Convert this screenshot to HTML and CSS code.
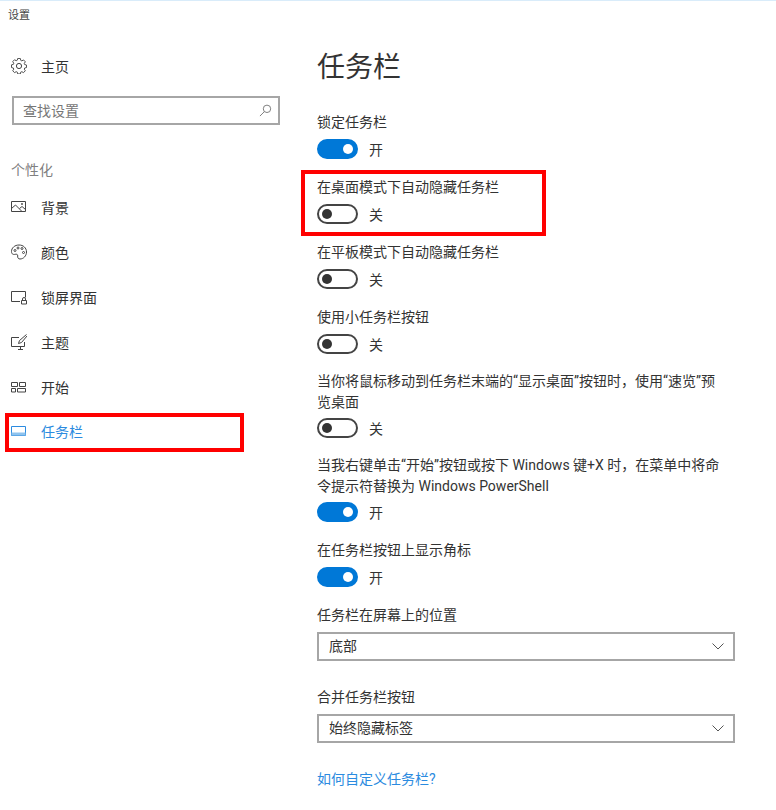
FILE: index.html
```html
<!DOCTYPE html>
<html lang="zh-CN">
<head>
    <meta charset="UTF-8">
    <meta name="viewport" content="width=device-width, initial-scale=1.0">
    <title>设置</title>
    <link rel="stylesheet" href="styles.css">
</head>
<body>
    <div class="window">
        <div class="titlebar">设置</div>

        <div class="content">
            <div class="sidebar">
                <div class="nav-item home">
                    <svg class="nav-icon" viewBox="0 0 16 16"><path d="M6.6 1h2.8l.4 2 1.2.6 1.8-1 1.9 2-1.1 1.7.4 1.2 2 .5v2.7l-2 .5-.4 1.2 1.1 1.7-1.9 2-1.8-1-1.2.5-.4 1.9H6.6l-.4-1.9-1.2-.5-1.8 1-1.9-2 1.1-1.7-.4-1.2-2-.5V7.8l2-.5.4-1.2-1.1-1.7 1.9-2 1.8 1 1.2-.6z" transform="translate(.5 -.5) scale(.94)"/><circle cx="8" cy="8" r="2.6"/></svg>
                    <span>主页</span>
                </div>

                <div class="search-box">
                    <span>查找设置</span>
                    <svg class="search-icon" viewBox="0 0 14 14"><circle cx="8.6" cy="5.2" r="4"/><path d="M5.8 8.2 1 13"/></svg>
                </div>

                <div class="nav-heading">个性化</div>

                <div class="nav-item">
                    <svg class="nav-icon" viewBox="0 0 16 16"><path d="M.5 2.5h14v10H.5z"/><path d="M.5 9.500 4.500 6l6.500 6.500M8.500 9.500l2.500-2 3.500 3"/><circle cx="11" cy="5" r=".6"/></svg>
                    <span>背景</span>
                </div>
                <div class="nav-item">
                    <svg class="nav-icon" viewBox="0 0 16 16"><path d="M8 1C3.800 1 .5 3.800.5 7.500c0 3 2.200 3.200 3.700 2.800 1.500-.4 2.800.2 2.500 1.700-.3 1.700.6 3 2.300 3 3.500 0 6.500-3.200 6.500-7C15.500 3.800 12.200 1 8 1z"/><circle cx="4" cy="6.500" r="1"/><circle cx="7" cy="4" r="1"/><circle cx="11" cy="4.500" r="1"/><circle cx="12.500" cy="8.500" r="1"/></svg>
                    <span>颜色</span>
                </div>
                <div class="nav-item">
                    <svg class="nav-icon" viewBox="0 0 16 16"><path d="M9 12.500H.5v-10h14v6"/><path d="M10.500 11.500h5v3.500h-5zM11.500 11.500V10a1.500 1.500 0 0 1 3 0v1.500"/></svg>
                    <span>锁屏界面</span>
                </div>
                <div class="nav-item">
                    <svg class="nav-icon" viewBox="0 0 16 16"><path d="M8 3.500H.5v9h13V8M7 15.500h5M9.500 12.500v3"/><path d="M15.500.5 8.500 6.500l-1 3 3-1 5.500-6.500"/></svg>
                    <span>主题</span>
                </div>
                <div class="nav-item">
                    <svg class="nav-icon" viewBox="0 0 16 16"><path d="M.5 3.500h6v4h-6zM8.500 3.500h6v4h-6zM.5 9.500h4v3.500h-4zM6.500 9.500h8v3.500h-8z"/></svg>
                    <span>开始</span>
                </div>
                <div class="nav-item active">
                    <svg class="nav-icon" viewBox="0 0 16 16"><path d="M.5 3.500h14v9H.5z"/><path class="fill" d="M.5 9.500h14v3H.5z"/></svg>
                    <span>任务栏</span>
                </div>
            </div>

            <div class="main">
                <h1>任务栏</h1>

                <div class="setting">
                    <div class="setting-label">锁定任务栏</div>
                    <div class="toggle-row"><div class="toggle on"></div><span>开</span></div>
                </div>
                <div class="setting">
                    <div class="setting-label">在桌面模式下自动隐藏任务栏</div>
                    <div class="toggle-row"><div class="toggle"></div><span>关</span></div>
                </div>
                <div class="setting">
                    <div class="setting-label">在平板模式下自动隐藏任务栏</div>
                    <div class="toggle-row"><div class="toggle"></div><span>关</span></div>
                </div>
                <div class="setting">
                    <div class="setting-label">使用小任务栏按钮</div>
                    <div class="toggle-row"><div class="toggle"></div><span>关</span></div>
                </div>
                <div class="setting two-line first">
                    <div class="setting-label">当你将鼠标移动到任务栏末端的“显示桌面”按钮时，使用“速览”预览桌面</div>
                    <div class="toggle-row"><div class="toggle"></div><span>关</span></div>
                </div>
                <div class="setting two-line">
                    <div class="setting-label">当我右键单击“开始”按钮或按下 Windows 键+X 时，在菜单中将命令提示符替换为 Windows PowerShell</div>
                    <div class="toggle-row"><div class="toggle on"></div><span>开</span></div>
                </div>
                <div class="setting">
                    <div class="setting-label">在任务栏按钮上显示角标</div>
                    <div class="toggle-row"><div class="toggle on"></div><span>开</span></div>
                </div>

                <div class="setting has-select">
                    <div class="setting-label">任务栏在屏幕上的位置</div>
                    <div class="select-box">
                        <span>底部</span>
                        <svg class="chevron" viewBox="0 0 12 7"><path d="M.5.5 6 6 11.500.5"/></svg>
                    </div>
                </div>
                <div class="setting has-select">
                    <div class="setting-label">合并任务栏按钮</div>
                    <div class="select-box">
                        <span>始终隐藏标签</span>
                        <svg class="chevron" viewBox="0 0 12 7"><path d="M.5.5 6 6 11.500.5"/></svg>
                    </div>
                </div>

                <a class="help-link" href="#">如何自定义任务栏?</a>
            </div>
        </div>

        <!-- red marks drawn over the screenshot -->
        <div class="mark mark-setting"></div>
        <div class="mark mark-nav"></div>
    </div>
</body>
</html>
```

FILE: styles.css
```css
* {
    box-sizing: border-box;
}

body {
    margin: 0;
    background-color: #fff;
    color: #333;
    font-family: Roboto, "Noto Sans CJK SC", sans-serif;
    font-size: 14px;
}

.window {
    position: relative;
    width: 776px;
    height: 810px;
    overflow: hidden;
    border-top: 1px solid #d9ecfa;
}

.titlebar {
    height: 29px;
    padding-left: 8px;
    font-size: 11px;
    line-height: 29px;
    color: #444;
}

.content {
    display: flex;
}

/* left column */
.sidebar {
    width: 317px;
    padding-top: 14px;
    flex: none;
}

.nav-item {
    display: flex;
    align-items: center;
    gap: 14px;
    height: 44.8px;
    padding-left: 11px;
    color: #333;
}

.nav-item.home {
    height: 44px;
}

.nav-item.active {
    color: #2b8be0;
}

.nav-icon {
    width: 16px;
    height: 16px;
    flex: none;
    fill: none;
    stroke: #444;
    stroke-width: 1;
}

.nav-item.active .nav-icon {
    stroke: #2b8be0;
}

.nav-icon .fill {
    fill: #8fc3ee;
    stroke: none;
}

.search-box {
    display: flex;
    align-items: center;
    justify-content: space-between;
    width: 268px;
    height: 29px;
    margin: 8px 0 0 12px;
    padding: 0 6px 0 9px;
    border: 2px solid #a6a6a6;
    color: #777;
}

.search-box span,
.select-box span {
    padding-bottom: 2px;
}

.search-icon {
    width: 13px;
    height: 13px;
    fill: none;
    stroke: #777;
    stroke-width: 1;
}

.nav-heading {
    height: 20px;
    margin: 35px 0 5px 11px;
    color: #808080;
    line-height: 20px;
}

/* right column */
.main {
    flex: 1;
    padding-right: 41px;
}

h1 {
    height: 40px;
    margin: 18px 0 22px;
    font-size: 28px;
    font-weight: 400;
    line-height: 40px;
    color: #333;
}

.setting {
    margin-bottom: 16.600px;
}

.setting.two-line {
    margin-top: -1.400px;
}

.setting.two-line.first {
    margin-top: -.400px;
}

.setting.has-select {
    margin-bottom: 25px;
}

.setting-label {
    max-width: 408px;
    padding-top: 1.500px;
    line-height: 21px;
    color: #333;
}

.toggle-row {
    display: flex;
    align-items: center;
    gap: 11px;
    height: 20px;
    margin-top: 6px;
}

.two-line .toggle-row {
    margin-top: 5px;
}

.toggle {
    position: relative;
    width: 41px;
    height: 20px;
    border: 2px solid #444;
    border-radius: 10px;
    background-color: #fff;
}

.toggle::after {
    content: "";
    position: absolute;
    top: 3px;
    left: 3px;
    width: 10px;
    height: 10px;
    border-radius: 50%;
    background-color: #333;
}

.toggle.on {
    border-color: #0078d7;
    background-color: #0078d7;
}

.toggle.on::after {
    left: auto;
    right: 3px;
    background-color: #fff;
}

.select-box {
    display: flex;
    align-items: center;
    justify-content: space-between;
    height: 29px;
    margin-top: 5.500px;
    padding: 0 9px 0 10px;
    border: 2px solid #a6a6a6;
}

.chevron {
    width: 12px;
    height: 7px;
    fill: none;
    stroke: #555;
    stroke-width: 1;
}

.help-link {
    display: block;
    padding-top: 1.500px;
    line-height: 21px;
    color: #2b8be0;
    text-decoration: none;
}

/* annotations */
.mark {
    position: absolute;
    border: 4px solid #f00;
}

.mark-setting {
    left: 301px;
    top: 169px;
    width: 245px;
    height: 66px;
}

.mark-nav {
    left: 5px;
    top: 412px;
    width: 239px;
    height: 39px;
}
```
